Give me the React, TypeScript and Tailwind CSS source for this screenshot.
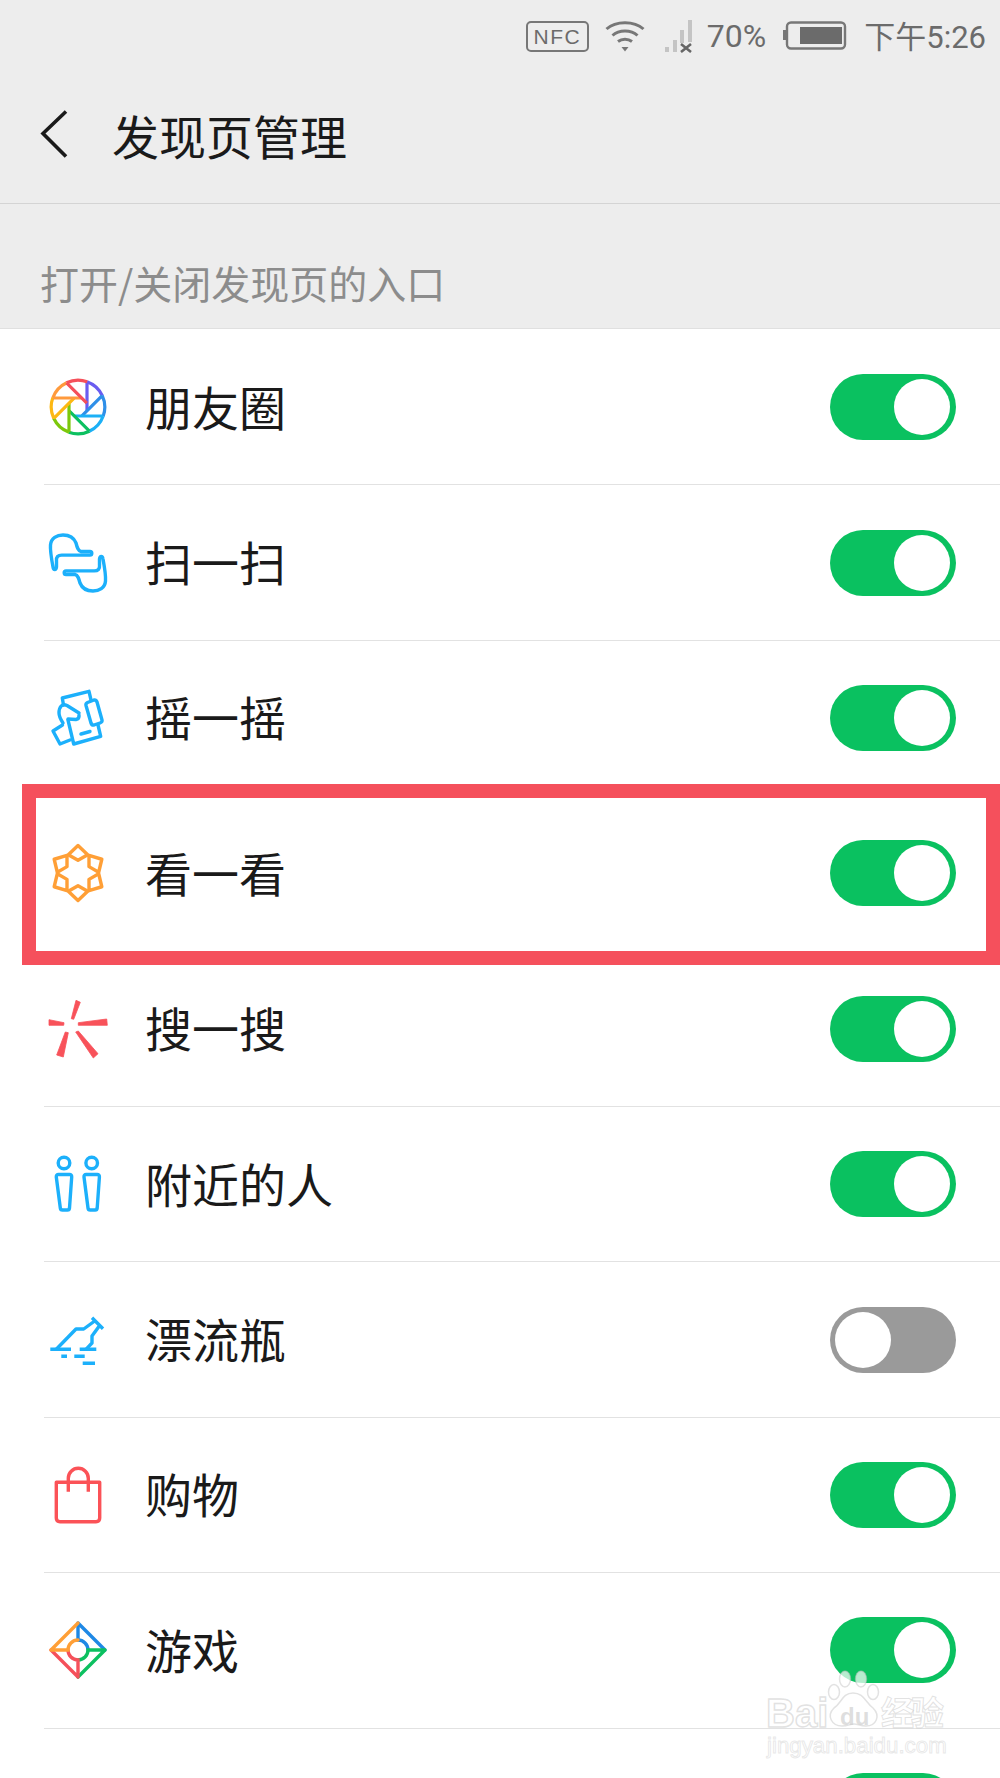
import React from "react";

const cjk = "font-['Noto_Sans_CJK_SC','Noto_Sans',sans-serif]";

function Aperture() {
  const c = ["#6a5cf0", "#2f8fe8", "#1cb0f6", "#0cc060", "#7cc80c", "#fdb813", "#ff9a3c", "#f5505a"];
  return (
    <svg width="60" height="60" viewBox="-30 -30 60 60" fill="none" strokeWidth="3.200">
      {c.map((col, i) => (
        <path key={col} transform={`rotate(${i * 45})`} stroke={col} d="M9 -25.200 V3.500 M9 -25.200 A26.800 26.800 0 0 1 24.300 -11.300" />
      ))}
    </svg>
  );
}

function Scan() {
  const d = "M5 34 C3.500 26 2 18 2.500 12 C3 5 9 2 15 2 C22 2 26 5 28 10 C29 14 30 18 33 18.500 H42 a1.800 1.800 0 0 1 0 3.600 H14 C10 22 8 24 8.500 28 V34 C8 37.500 5.500 37.500 5 34Z";
  return (
    <svg width="60" height="60" viewBox="0 0 60 60" fill="none" stroke="#1cb0fb" strokeWidth="3.400" strokeLinejoin="round">
      <path d={d} />
      <path d={d} transform="rotate(180 30 30)" />
    </svg>
  );
}

function Shake() {
  return (
    <svg width="60" height="60" viewBox="0 0 60 60" fill="none" stroke="#1cb0fb" strokeWidth="3.400" strokeLinejoin="round" strokeLinecap="round">
      <path d="M15.500 17 L14.300 10 L41 3.300 L43 12" />
      <path d="M50 37 L52.700 48.300 L25.700 56 L20 32" />
      <path d="M39.500 14.500 L46 12 Q48 11.500 49 14 L54 32 Q54.500 34 52 35 L46 37 Q44 37.500 43 35 L38 17.500 Q37.500 15.500 39.500 14.500Z" />
      <path d="M31 25 L19 17.500 C14 15 11 19 11 25 C11 29 13 32 15 35 M20 31 L28 31.500 Q31.500 31 31 27" />
      <path d="M14.500 37 L5 43 L12 56 L22 52" />
      <path d="M33 46 L42 43.500" />
    </svg>
  );
}

function Star() {
  return (
    <svg width="60" height="60" viewBox="-30 -30 60 60" fill="none" stroke="#ff9f36" strokeWidth="3.400" strokeLinejoin="round">
      {[0, 60, 120, 180, 240, 300].map((r) => (
        <path key={r} transform={`rotate(${r})`} d="M0 -27.500 L9.700 -18.300 L0 -12.700 L-9.700 -18.300Z" />
      ))}
    </svg>
  );
}

function Search() {
  return (
    <svg width="60" height="60" viewBox="0 0 60 60" fill="#f8525a" stroke="#f8525a" strokeWidth="0.800" strokeLinejoin="round">
      <path d="M23.300 19.700 L28 1.300 L32.300 3.300 L25.700 20.300Z" />
      <path d="M1 20.700 L16 23.700 L15.700 26.300 L1 26.300Z" />
      <path d="M30.300 23.700 L58.700 20 L59.300 26.300 L30.300 26.300Z" />
      <path d="M17.300 33 L20.300 33.700 L15.300 58 L8.700 56Z" />
      <path d="M27.700 33 L30.300 32 L50 54.700 L45.300 59Z" />
    </svg>
  );
}

function People() {
  return (
    <svg width="60" height="60" viewBox="0 0 60 60" fill="none" stroke="#1cb0fb" strokeWidth="3.400" strokeLinejoin="round">
      <circle cx="16" cy="9" r="5.800" />
      <circle cx="43.700" cy="9" r="5.800" />
      <path d="M10.500 20.500 H21.500 Q23.800 20.500 23.700 23 L21.500 54 Q21.300 56 19.500 56 H14.500 Q12.500 56 12.300 54 L8.300 23 Q8.200 20.500 10.500 20.500Z" />
      <path d="M38.200 20.500 H49.200 Q51.500 20.500 51.400 23 L49.200 54 Q49 56 47.200 56 H42.200 Q40.200 56 40 54 L36 23 Q35.900 20.500 38.200 20.500Z" />
    </svg>
  );
}

function Bottle() {
  return (
    <svg width="60" height="60" viewBox="0 0 60 60" fill="none" stroke="#1cb0fb" strokeWidth="3.400" strokeLinejoin="round">
      <path d="M2.300 39.300 H23 M31.700 39.300 H48.300 M13.300 46.300 H19 M26.300 46.300 H36.700 M34.700 53.300 H47" />
      <path d="M8.300 39.300 L28 19 H35.700 L46.700 11 M44 7.700 L55 18.700 M51.300 16 L44 26 V33 L38 39.300" />
    </svg>
  );
}

function Bag() {
  return (
    <svg width="60" height="60" viewBox="0 0 60 60" fill="none" stroke="#fb5257" strokeWidth="3.400" strokeLinejoin="round">
      <path d="M8.300 17.300 H51.700 V53 Q51.700 56.700 48 56.700 H12 Q8.300 56.700 8.300 53Z" />
      <path d="M20.300 26.700 V13.300 A10 10 0 0 1 40.300 13.300 V26.700" />
    </svg>
  );
}

function Game() {
  const c = ["#1e88e5", "#0cc060", "#f5505a", "#ff9f36"];
  return (
    <svg width="60" height="60" viewBox="-30 -30 60 60" fill="none" strokeWidth="3.400" strokeLinecap="round">
      {c.map((col, i) => (
        <path key={col} transform={`rotate(${i * 90})`} stroke={col} d="M0 -27 V-10 A10 10 0 0 1 10 0 M0 -27 L27 0" />
      ))}
    </svg>
  );
}

function Toggle({ on = true }: { on?: boolean }) {
  return on ? (
    <div className="flex h-[66px] w-[126px] items-center justify-end rounded-full bg-[#0ac160] pr-[6px]">
      <div className="h-[56px] w-[56px] rounded-full bg-white" />
    </div>
  ) : (
    <div className="flex h-[66px] w-[126px] items-center justify-start rounded-full bg-[#9a9a9a] pl-[5px]">
      <div className="h-[56px] w-[56px] rounded-full bg-white" />
    </div>
  );
}

function Row({ icon, label, on = true, children }: { icon: React.ReactNode; label: string; on?: boolean; children?: React.ReactNode }) {
  return (
    <div className="relative ml-[44px] flex h-[155.400px] shrink-0 items-center border-b border-[#e2e2e2] pr-[44px]">
      <div className="ml-[4px] flex h-[60px] w-[60px] shrink-0 items-center justify-center">{icon}</div>
      <div className={`ml-[37px] flex-1 pb-[4px] text-[47px] leading-none text-[#1a1a1a] ${cjk}`}>{label}</div>
      <Toggle on={on} />
      {children}
    </div>
  );
}

function StatusBar() {
  return (
    <div className="flex h-[70px] items-center justify-end pr-[14px] pt-[2px] text-[#6b6b6b]">
      <div className="flex h-[31px] w-[63px] items-center justify-center rounded-[5px] border-[2.500px] border-[#777] font-['Liberation_Sans',sans-serif] text-[21px] leading-none tracking-[1.500px]">
        NFC
      </div>
      <svg className="ml-[16px]" width="40" height="34" viewBox="0 0 40 34" fill="none" stroke="#777" strokeWidth="3">
        <path d="M1.500 10 C11 1.500 29 1.500 38.500 10" />
        <path d="M7.500 16.500 C14 10.500 26 10.500 32.500 16.500" />
        <path d="M13 22.500 C17 19.500 23 19.500 27 22.500" />
        <path d="M16.500 28 L23.500 28 L20 32.500Z" fill="#777" stroke="none" />
      </svg>
      <svg className="ml-[20px]" width="30" height="34" viewBox="0 0 30 34" fill="none">
        <rect x="0" y="28" width="4" height="5" fill="#c4c4c4" />
        <rect x="8" y="21" width="4" height="12" fill="#c4c4c4" />
        <rect x="15" y="11" width="4" height="13" fill="#c4c4c4" />
        <rect x="23" y="1" width="4" height="22" fill="#c4c4c4" />
        <path d="M16 25 L26 33 M26 25 L16 33" stroke="#666" strokeWidth="2.600" />
      </svg>
      <span className="ml-[12px] font-['Roboto',sans-serif] text-[32px] leading-none">70%</span>
      <svg className="ml-[17px]" width="64" height="30" viewBox="0 0 64 30" fill="none">
        <rect x="0" y="9" width="3.500" height="10" fill="#777" />
        <rect x="4" y="1.500" width="58" height="26" rx="4" stroke="#777" strokeWidth="2.400" />
        <rect x="17" y="6" width="42" height="17" fill="#6b6b6b" />
      </svg>
      <span className={`ml-[17px] text-[31px] leading-none ${cjk}`}>
        下午<span className="font-['Roboto',sans-serif]">5:26</span>
      </span>
    </div>
  );
}

function Watermark() {
  return (
    <div className="pointer-events-none absolute left-[766px] top-[1690px] h-[80px] w-[190px]">
      <div className="absolute left-0 top-[3px] font-['Liberation_Sans',sans-serif] text-[40px] font-bold leading-none text-white/60 [-webkit-text-stroke:1.500px_rgba(190,190,190,0.45)]">
        Bai
      </div>
      <svg className="absolute left-[60px] top-[-20px]" width="60" height="58" viewBox="0 0 60 58" fill="rgba(255,255,255,0.7)" stroke="rgba(190,190,190,0.45)" strokeWidth="1.500">
        <ellipse cx="19" cy="9" rx="5.500" ry="8" />
        <ellipse cx="35" cy="9" rx="5.500" ry="8" />
        <ellipse cx="8" cy="22" rx="5.500" ry="7.500" />
        <ellipse cx="47" cy="22" rx="5.500" ry="7.500" />
        <path d="M27 23 C16 23 16 33 8 38 C0 46 6 56 16 56 C22 56 24 54 28 54 C32 54 34 56 40 56 C50 56 55 46 47 38 C39 32 38 23 27 23Z" />
      </svg>
      <div className="absolute left-[74px] top-[15px] font-['Liberation_Sans',sans-serif] text-[24px] font-bold leading-none text-[#cfcfcf]/70">du</div>
      <div className={`absolute left-[115px] top-[5px] text-[33px] font-bold leading-none tracking-[-3px] text-white/60 [-webkit-text-stroke:1px_rgba(190,190,190,0.45)] ${cjk}`}>
        经验
      </div>
      <div className="absolute left-[1px] top-[45px] whitespace-nowrap font-['Liberation_Sans',sans-serif] text-[22.300px] leading-none text-white/60 [-webkit-text-stroke:1px_rgba(190,190,190,0.35)]">
        jingyan.baidu.com
      </div>
    </div>
  );
}

export default function App() {
  return (
    <div className="relative flex h-[1778px] w-[1000px] flex-col overflow-hidden bg-white">
      <div className="shrink-0 bg-[#ededed]">
        <StatusBar />
        <div className="flex h-[134px] items-center border-b border-[#d4d4d4] pb-[5px]">
          <svg className="ml-[40px]" width="28" height="48" viewBox="0 0 28 48" fill="none" stroke="#1a1a1a" strokeWidth="3.600">
            <path d="M26 1.500 L3 23.500 L26 46.500" />
          </svg>
          <div className={`ml-[44px] text-[47px] leading-none text-[#1a1a1a] ${cjk}`}>发现页管理</div>
        </div>
        <div className={`flex h-[125px] items-end border-b border-[#e0e0e0] pb-[26px] pl-[40px] text-[39px] leading-none text-[#8c8c8c] ${cjk}`}>
          打开/关闭发现页的入口
        </div>
      </div>
      <div className="h-px shrink-0" />
      <Row icon={<Aperture />} label="朋友圈" />
      <Row icon={<Scan />} label="扫一扫" />
      <Row icon={<Shake />} label="摇一摇" />
      <Row icon={<Star />} label="看一看">
        <div className="absolute bottom-[-14px] left-[-22px] right-0 top-[-12.500px] border-[14px] border-[#f5505c]" />
      </Row>
      <Row icon={<Search />} label="搜一搜" />
      <Row icon={<People />} label="附近的人" />
      <Row icon={<Bottle />} label="漂流瓶" on={false} />
      <Row icon={<Bag />} label="购物" />
      <Row icon={<Game />} label="游戏" />
      <Row icon={null} label="" />
      <Watermark />
    </div>
  );
}
